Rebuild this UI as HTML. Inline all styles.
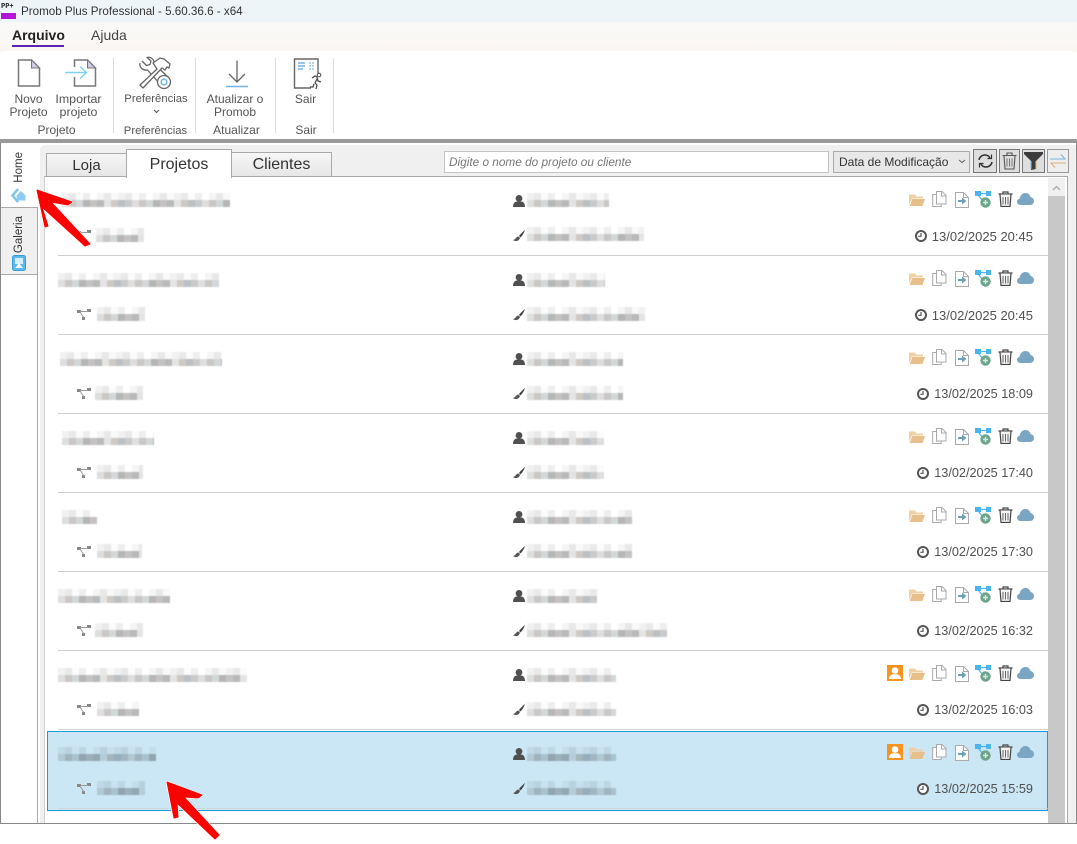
<!DOCTYPE html>
<html><head><meta charset="utf-8"><style>
html,body{margin:0;padding:0;background:#fff}
#p{position:relative;width:1077px;height:844px;overflow:hidden;background:#fff;font-family:"Liberation Sans",sans-serif;color:#444}
#p *{box-sizing:border-box}
.a{position:absolute}
.t{position:absolute;white-space:nowrap;text-align:center}
.sep{position:absolute;width:1px;background:#e0dcd8;top:58px;height:75px}
.rb{font-size:12px;line-height:13px;color:#555}
.gl{font-size:12px;line-height:14px;color:#555;top:123px}
.tab{position:absolute;border:1px solid #aaa;border-bottom:0;background:linear-gradient(#f6f6f6,#e6e6e6);font-size:16px;color:#333;text-align:center;white-space:nowrap}
.btn{position:absolute;top:149px;height:24px;border:1px solid #777;background:#dedede}
.r{position:absolute;left:48px;width:1000px;height:79px}
.r .l{position:absolute;left:10px;right:0;top:79px;height:1px;background:#d0d0d0}
.b{position:absolute;height:14px;mix-blend-mode:multiply;filter:blur(.6px);background:linear-gradient(90deg,#f1f1f1 0 7px,#e9e9e9 7px 14px,#fbfbfb 14px 21px,#eeeeee 21px 28px,#fff 28px 35px,#f5f5f5 35px 42px,#e8e8e8 42px 49px,#f9f9f9 49px 56px) 0 0/56px 7px repeat-x,linear-gradient(90deg,#dedede 0 7px,#cbc7c5 7px 14px,#d2d8d8 14px 21px,#b6b6b6 21px 28px,#c5c2c2 28px 35px,#b8baba 35px 42px,#e4e4e4 42px 49px,#cec9c3 49px 56px,#bbc0c4 56px 63px,#cacaca 63px 70px) 0 7px/70px 7px repeat-x}
.d{position:absolute;top:53px;right:15px;font-size:12.7px;line-height:15px;color:#505050;white-space:nowrap}
.d.w{font-size:13px}
.i{position:absolute;overflow:visible}
</style></head><body><div id="p">
<svg width="0" height="0" style="position:absolute"><defs>
<symbol id="folder" viewBox="0 0 16 16"><path d="M0 2.500h6l1.500 2H14v2H3L0 13z" fill="#f0d0a5"/><path d="M3.300 7H16l-2.600 7H.6z" fill="#e8bf8a"/></symbol>
<symbol id="copy" viewBox="0 0 15 16"><path d="M.7 3.500h8.500v12H.7z" fill="#fff" stroke="#aaa"/><path d="M4.500 .5h5.500l4 4v8.500H4.500z" fill="#fff" stroke="#aaa"/><path d="M9.500 .5v4.500h4.500" fill="none" stroke="#aaa"/></symbol>
<symbol id="imp" viewBox="0 0 14 16"><path d="M.5 .5h8l5 5v10H.5z" fill="#fff" stroke="#aaa"/><path d="M8.500 .5v5h5" fill="none" stroke="#aaa"/><path d="M3 8h4V5.500L11.500 9 7 12.500V10H3z" fill="#6ba0b8"/></symbol>
<symbol id="share" viewBox="0 0 16 17"><rect x="0" y="0" width="6" height="5" fill="#4db5ee"/><rect x="11" y="0" width="5" height="5" fill="#4db5ee"/><path d="M5 2.500h7M3 4l5 6" stroke="#4db5ee" stroke-width="1.200" fill="none"/><circle cx="10.500" cy="11.500" r="5.200" fill="#6da58c"/><path d="M10.500 9v5M8 11.500h5" stroke="#d6ebe0" stroke-width="1.400"/></symbol>
<symbol id="trash" viewBox="0 0 15 16"><path d="M.5 3h14M5 3V1h5v2" fill="none" stroke="#444" stroke-width="1.200"/><path d="M2 3.500l1 12h9l1-12" fill="#f4f4f4" stroke="#444" stroke-width="1.200"/><path d="M5 6v7.500M7.500 6v7.500M10 6v7.500" stroke="#666" stroke-width="1"/></symbol>
<symbol id="cloud" viewBox="0 0 17 12"><path d="M3.500 12C1.500 12 0 10.600 0 8.800 0 7.200 1.100 6 2.600 5.700 3 2.400 5.600 0 8.500 0c2.600 0 4.500 1.700 5 4 1.900.3 3.500 2 3.500 4 0 2.300-1.700 4-4 4z" fill="#7aa6c4"/></symbol>
<symbol id="person" viewBox="0 0 12 12"><circle cx="6" cy="3.400" r="3.400" fill="#505050"/><path d="M0 12.500c0-3.500 1-5.500 3.500-6h5c2.500.5 3.500 2.500 3.500 6z" fill="#505050"/></symbol>
<symbol id="brush" viewBox="0 0 12 12"><path d="M12 0C10 1.500 7.500 4 6 6l1.500 1.500C9.500 5.500 11 3 12 0z" fill="#444"/><path d="M5.300 6.500C3 6.500 3 9.500 0 10c1.500 1.500 6 2 7-2.200z" fill="#555"/></symbol>
<symbol id="branch" viewBox="0 0 14 11"><rect x="0" y="1" width="4" height="3" fill="#888"/><rect x="10" y="0" width="4" height="3" fill="#888"/><rect x="5" y="8" width="3" height="3" fill="#888"/><path d="M3 2.500h8M3 3l4 6" stroke="#999" stroke-width="1" fill="none"/></symbol>
<symbol id="clock" viewBox="0 0 12 12"><circle cx="6" cy="6" r="5" fill="#fff" stroke="#555" stroke-width="2"/><path d="M6 3v3.300H3.300" fill="none" stroke="#555" stroke-width="1.200"/></symbol>
<symbol id="orange" viewBox="0 0 16 16"><rect width="16" height="16" fill="#f7931e"/><circle cx="8" cy="5.500" r="3.300" fill="#fff"/><path d="M2 14c0-3 2-4.500 4-4.800h4c2 .3 4 1.800 4 4.800z" fill="#fff"/></symbol>
<symbol id="icons" viewBox="0 0 126 17"><use href="#folder" x="0" y="1" width="16" height="16"/><use href="#copy" x="23" y="0" width="15" height="16"/><use href="#imp" x="46" y="1" width="14" height="16"/><use href="#share" x="66" y="0" width="16" height="17"/><use href="#trash" x="89" y="0" width="15" height="16"/><use href="#cloud" x="108" y="2" width="17" height="12"/></symbol>
</defs></svg>

<!-- title bar -->
<div class="a" style="left:0;top:0;width:1077px;height:22px;background:#eef5f8"></div>
<div class="a" style="left:1px;top:3px;font:bold 7px 'Liberation Mono',monospace;color:#222">PP+</div>
<div class="a" style="left:1px;top:13px;width:15px;height:6px;background:#b514d6"></div>
<div class="t" style="left:21px;top:5px;font-size:11.63px;line-height:14px;color:#333">Promob Plus Professional - 5.60.36.6 - x64</div>
<!-- ribbon tabs -->
<div class="a" style="left:0;top:22px;width:1077px;height:30px;background:linear-gradient(#f9f9f9,#fbf6f2)"></div>
<div class="t" style="left:12px;top:27px;font-size:14px;font-weight:bold;line-height:17px;color:#222">Arquivo</div>
<div class="a" style="left:12px;top:45px;width:52px;height:2px;background:#5a23b8"></div>
<div class="t" style="left:91px;top:27px;font-size:14px;line-height:17px;color:#444">Ajuda</div>
<div class="a" style="left:0;top:51px;width:1077px;height:89px;background:#fff;border-radius:5px 5px 0 0"></div>

<!-- ribbon icons -->
<svg class="i" style="left:17px;top:59px" width="24" height="28" viewBox="0 0 24 28"><path d="M1.500 1h13l8 8v18H1.500z" fill="#fff" stroke="#777" stroke-width="1.500"/><path d="M14.500 1v8h8z" fill="#d2c9e6" stroke="#777" stroke-width="1"/></svg>
<svg class="i" style="left:64px;top:59px" width="34" height="28" viewBox="0 0 34 28"><path d="M10.500 8V1h13l8 8v18h-21v-9" fill="#fff" stroke="#777" stroke-width="1.500"/><path d="M23.500 1v8h8z" fill="#d2c9e6" stroke="#777"/><path d="M1 13.500h21M16 7.500l6.500 6-6.500 6" fill="none" stroke="#7cd3f5" stroke-width="1.400"/></svg>
<svg class="i" style="left:139px;top:57px" width="33" height="32" viewBox="0 0 33 32" fill="none" stroke="#666" stroke-width="1.300" stroke-linejoin="round"><path d="M3 4l4.500 4.500 3.500-1L12 4 8 .5C12-.5 15.500 2.500 15 7l14 13"/><path d="M1 6c-1 4 3 8 7.500 7L22 28"/><path d="M14 6l7-5 4 1 6 5-1 4-2-1-2 3-3-2L4 31l-3-3 17-16z" fill="#fff"/><circle cx="25" cy="25" r="6.500" fill="#fff"/><circle cx="25" cy="25" r="2.800" stroke="#6fb3e4" stroke-width="1.500"/></svg>
<svg class="i" style="left:225px;top:60px" width="24" height="28" viewBox="0 0 24 28"><path d="M12 .5v21M4 14l8 8 8-8" fill="none" stroke="#666" stroke-width="1.300"/><path d="M1 26.500h22" stroke="#6fb4ea" stroke-width="1.500"/></svg>
<svg class="i" style="left:293px;top:58px" width="30" height="32" viewBox="0 0 30 32"><path d="M25 15V1H1.500v29H18" fill="#fff" stroke="#666" stroke-width="1.400"/><path d="M5 5h7M5 8h7M5 11h5" stroke="#6fb4ea" stroke-width="1.500"/><path d="M16 5h6M16 8h6M16 11h6" stroke="#9cc7ea" stroke-width="1.500" stroke-dasharray="2 1"/><circle cx="26" cy="17" r="1.800" fill="none" stroke="#444"/><path d="M19 20l3-2 2 1 1 4 3 1M24 21l-2 4 2 2-1 4M21 26l-1 3-3 0" fill="none" stroke="#444" stroke-width="1.200"/></svg>

<div class="t rb" style="left:0;top:92px;width:57px;margin-top:1px">Novo<br>Projeto</div>
<div class="t rb" style="left:50px;top:92px;width:57px;margin-top:1px;font-size:12.400px">Importar<br>projeto</div>
<div class="t rb" style="left:118px;top:92px;width:76px;margin-top:1px;font-size:11.300px">Preferências</div>
<svg class="i" style="left:153px;top:109px" width="7" height="5"><path d="M1 1l2.500 2.500L6 1" fill="none" stroke="#555" stroke-width="1.100"/></svg>
<div class="t rb" style="left:198px;top:92px;width:74px;margin-top:1px">Atualizar o<br>Promob</div>
<div class="t rb" style="left:285px;top:92px;width:41px;margin-top:1px">Sair</div>
<div class="t gl" style="left:0;width:113px">Projeto</div>
<div class="t gl" style="left:115px;width:81px;margin-top:1px;font-size:11.300px">Preferências</div>
<div class="t gl" style="left:197px;width:79px">Atualizar</div>
<div class="t gl" style="left:277px;width:58px">Sair</div>
<div class="sep" style="left:113px"></div><div class="sep" style="left:195px"></div><div class="sep" style="left:275px"></div><div class="sep" style="left:333px"></div>
<div class="a" style="left:0;top:139px;width:1077px;height:4px;background:#9a9a9a"></div>

<!-- main frame -->
<div class="a" style="left:0;top:143px;width:1px;height:681px;background:#888"></div>
<div class="a" style="left:1076px;top:143px;width:1px;height:681px;background:#888"></div>
<div class="a" style="left:0;top:823px;width:1077px;height:1px;background:#888"></div>
<div class="a" style="left:40px;top:145px;width:1036px;height:678px;background:#f0f0f0;border-radius:5px 0 0 0"></div>

<!-- sidebar -->
<div class="a" style="left:37px;top:207px;width:1px;height:616px;background:#aaa"></div>
<div class="a" style="left:1px;top:207px;width:37px;height:1px;background:#aaa"></div>
<div class="a" style="left:1px;top:208px;width:36px;height:67px;background:#f0f0f0;border-bottom:1px solid #aaa"></div>
<div class="t" style="left:12px;top:152px;writing-mode:vertical-rl;transform:rotate(180deg);font-size:11.500px;line-height:14px;color:#333">Home</div>
<svg class="i" style="left:11px;top:188px" width="15" height="15" viewBox="0 0 15 15"><path d="M7 1L1.500 7.500 7 14" fill="none" stroke="#7cc4ea" stroke-width="2.500"/><path d="M5.500 7.500L10 3l4.500 4.500V12.500H6z" fill="#8ecdf0"/></svg>
<div class="t" style="left:12px;top:216px;writing-mode:vertical-rl;transform:rotate(180deg);font-size:11.500px;line-height:14px;color:#333">Galeria</div>
<svg class="i" style="left:12px;top:255px" width="14" height="16" viewBox="0 0 14 16"><rect x=".5" y=".5" width="13" height="15" rx="2" fill="#5cb8ee" stroke="#3c9ad6"/><rect x="3" y="3" width="8" height="6" fill="#d4eefb"/><path d="M3 13l4-5 4 5z" fill="#fff"/></svg>

<!-- tabs -->
<div class="tab" style="left:46px;top:153px;width:81px;height:24px;line-height:24px;font-size:15px">Loja</div>
<div class="tab" style="left:231px;top:152px;width:101px;height:25px;line-height:24px">Clientes</div>
<div class="a" style="left:44px;top:176px;width:1024px;height:647px;background:#fff;border-top:1px solid #aaa;border-right:1px solid #aaa;border-left:1px solid #d0d0d0"></div>
<div class="tab" style="left:126px;top:149px;width:106px;height:29px;line-height:29px;background:#fff">Projetos</div>

<!-- search -->
<div class="a" style="left:444px;top:151px;width:385px;height:22px;background:#fff;border:1px solid #c4c4c4;font-style:italic;font-size:11.800px;line-height:20px;color:#777;padding-left:4px;white-space:nowrap">Digite o nome do projeto ou cliente</div>
<div class="a" style="left:833px;top:151px;width:137px;height:22px;background:#e8e8e8;border:1px solid #aaa;font-size:12px;line-height:20px;color:#333;padding-left:5px;white-space:nowrap">Data de Modificação</div>
<svg class="i" style="left:958px;top:159px" width="8" height="5"><path d="M1 1l3 2.500L7 1" fill="none" stroke="#666" stroke-width="1.100"/></svg>
<div class="btn" style="left:973px;width:24px"></div>
<svg class="i" style="left:977px;top:153px" width="17" height="16" viewBox="0 0 17 16" fill="none" stroke="#333" stroke-width="1.500"><path d="M2 7c.5-3 3-5 6-5 2 0 4 1 5 3"/><path d="M15 9c-.5 3-3 5-6 5-2 0-4-1-5-3"/><path d="M14.500 1.500v4h-4" stroke-width="1.200"/><path d="M2.500 14.500v-4h4" stroke-width="1.200"/></svg>
<div class="btn" style="left:999px;width:21px"></div>
<svg class="i" style="left:1002px;top:152px" width="15" height="18" viewBox="0 0 15 18"><path d="M.5 3.500h14M5 3.500V1h5v2.500" fill="none" stroke="#555" stroke-width="1.100"/><path d="M2 4l1 13h9l1-13" fill="#ddd" stroke="#555" stroke-width="1.100"/><path d="M5 6.500v8M7.500 6.500v8M10 6.500v8" stroke="#777"/></svg>
<div class="btn" style="left:1022px;width:23px"></div>
<svg class="i" style="left:1024px;top:152px" width="19" height="18" viewBox="0 0 19 18"><path d="M0 0h19v2l-7 7v8l-5 1V9L0 2z" fill="#3c3c3c"/><path d="M12 9v8" stroke="#e8b27a"/><path d="M7 9v8" stroke="#8bbfe0"/></svg>
<div class="btn" style="left:1047px;width:22px;background:#eee;border-color:#999"></div>
<svg class="i" style="left:1049px;top:153px" width="18" height="16" viewBox="0 0 18 16" fill="none" stroke-width="1.100"><path d="M1 6h15L12 1.500" stroke="#7cb6dc"/><path d="M17 10H2l4 4.500" stroke="#d8b27c"/></svg>

<!-- scrollbar -->
<div class="a" style="left:1048px;top:178px;width:17px;height:645px;background:#c8c8c8"></div>
<div class="a" style="left:1048px;top:178px;width:17px;height:18px;background:#f0f0f0"></div>
<svg class="i" style="left:1052px;top:185px" width="9" height="6"><path d="M1 5l3.500-3.500L8 5" fill="none" stroke="#aaa" stroke-width="1.300"/></svg>

<!-- selected row -->
<div class="a" style="left:47px;top:731px;width:1001px;height:80px;background:#cbe6f5;border:1px solid #1e9bd7"></div>

<div class="r" style="top:176px"><div class="l"></div><div class="b" style="left:14px;top:17px;width:168px"></div><div class="b" style="left:48px;top:52px;width:48px"></div><div class="b" style="left:479px;top:17px;width:82px"></div><div class="b" style="left:479px;top:51px;width:117px"></div><svg class="i" style="left:861px;top:15px" width="126" height="17"><use href="#icons"/></svg><svg class="i" style="left:29px;top:54px" width="14" height="11"><use href="#branch"/></svg><svg class="i" style="left:465px;top:19px" width="12" height="12"><use href="#person"/></svg><svg class="i" style="left:465px;top:54px" width="12" height="12"><use href="#brush"/></svg><svg class="i" style="left:867px;top:54px" width="12" height="12"><use href="#clock"/></svg><div class="d w">13/02/2025 20:45</div></div>

<div class="r" style="top:255px"><div class="l"></div><div class="b" style="left:10px;top:18px;width:161px"></div><div class="b" style="left:49px;top:52px;width:48px"></div><div class="b" style="left:479px;top:18px;width:78px"></div><div class="b" style="left:479px;top:52px;width:118px"></div><svg class="i" style="left:861px;top:15px" width="126" height="17"><use href="#icons"/></svg><svg class="i" style="left:29px;top:54px" width="14" height="11"><use href="#branch"/></svg><svg class="i" style="left:465px;top:19px" width="12" height="12"><use href="#person"/></svg><svg class="i" style="left:465px;top:54px" width="12" height="12"><use href="#brush"/></svg><svg class="i" style="left:867px;top:54px" width="12" height="12"><use href="#clock"/></svg><div class="d w">13/02/2025 20:45</div></div>

<div class="r" style="top:334px"><div class="l"></div><div class="b" style="left:12px;top:18px;width:162px"></div><div class="b" style="left:47px;top:52px;width:48px"></div><div class="b" style="left:479px;top:18px;width:96px"></div><div class="b" style="left:479px;top:52px;width:96px"></div><svg class="i" style="left:861px;top:15px" width="126" height="17"><use href="#icons"/></svg><svg class="i" style="left:29px;top:54px" width="14" height="11"><use href="#branch"/></svg><svg class="i" style="left:465px;top:19px" width="12" height="12"><use href="#person"/></svg><svg class="i" style="left:465px;top:54px" width="12" height="12"><use href="#brush"/></svg><svg class="i" style="left:869px;top:54px" width="12" height="12"><use href="#clock"/></svg><div class="d">13/02/2025 18:09</div></div>

<div class="r" style="top:413px"><div class="l"></div><div class="b" style="left:14px;top:18px;width:92px"></div><div class="b" style="left:49px;top:52px;width:46px"></div><div class="b" style="left:479px;top:18px;width:77px"></div><div class="b" style="left:479px;top:52px;width:77px"></div><svg class="i" style="left:861px;top:15px" width="126" height="17"><use href="#icons"/></svg><svg class="i" style="left:29px;top:54px" width="14" height="11"><use href="#branch"/></svg><svg class="i" style="left:465px;top:19px" width="12" height="12"><use href="#person"/></svg><svg class="i" style="left:465px;top:54px" width="12" height="12"><use href="#brush"/></svg><svg class="i" style="left:869px;top:54px" width="12" height="12"><use href="#clock"/></svg><div class="d">13/02/2025 17:40</div></div>

<div class="r" style="top:492px"><div class="l"></div><div class="b" style="left:14px;top:18px;width:35px"></div><div class="b" style="left:49px;top:52px;width:45px"></div><div class="b" style="left:479px;top:18px;width:105px"></div><div class="b" style="left:479px;top:52px;width:105px"></div><svg class="i" style="left:861px;top:15px" width="126" height="17"><use href="#icons"/></svg><svg class="i" style="left:29px;top:54px" width="14" height="11"><use href="#branch"/></svg><svg class="i" style="left:465px;top:19px" width="12" height="12"><use href="#person"/></svg><svg class="i" style="left:465px;top:54px" width="12" height="12"><use href="#brush"/></svg><svg class="i" style="left:869px;top:54px" width="12" height="12"><use href="#clock"/></svg><div class="d">13/02/2025 17:30</div></div>

<div class="r" style="top:571px"><div class="l"></div><div class="b" style="left:10px;top:18px;width:112px"></div><div class="b" style="left:47px;top:52px;width:48px"></div><div class="b" style="left:479px;top:18px;width:70px"></div><div class="b" style="left:479px;top:52px;width:140px"></div><svg class="i" style="left:861px;top:15px" width="126" height="17"><use href="#icons"/></svg><svg class="i" style="left:29px;top:54px" width="14" height="11"><use href="#branch"/></svg><svg class="i" style="left:465px;top:19px" width="12" height="12"><use href="#person"/></svg><svg class="i" style="left:465px;top:54px" width="12" height="12"><use href="#brush"/></svg><svg class="i" style="left:869px;top:54px" width="12" height="12"><use href="#clock"/></svg><div class="d">13/02/2025 16:32</div></div>

<div class="r" style="top:650px"><div class="l"></div><div class="b" style="left:10px;top:18px;width:189px"></div><div class="b" style="left:49px;top:52px;width:42px"></div><div class="b" style="left:479px;top:18px;width:89px"></div><div class="b" style="left:479px;top:52px;width:89px"></div><svg class="i" style="left:839px;top:15px" width="16" height="16"><use href="#orange"/></svg><svg class="i" style="left:861px;top:15px" width="126" height="17"><use href="#icons"/></svg><svg class="i" style="left:29px;top:54px" width="14" height="11"><use href="#branch"/></svg><svg class="i" style="left:465px;top:19px" width="12" height="12"><use href="#person"/></svg><svg class="i" style="left:465px;top:54px" width="12" height="12"><use href="#brush"/></svg><svg class="i" style="left:869px;top:54px" width="12" height="12"><use href="#clock"/></svg><div class="d">13/02/2025 16:03</div></div>

<div class="r" style="top:729px"><div class="l" style="opacity:.7"></div><div class="b" style="left:10px;top:18px;width:98px"></div><div class="b" style="left:49px;top:52px;width:48px"></div><div class="b" style="left:479px;top:18px;width:89px"></div><div class="b" style="left:479px;top:52px;width:89px"></div><svg class="i" style="left:839px;top:15px" width="16" height="16"><use href="#orange"/></svg><svg class="i" style="left:861px;top:15px" width="126" height="17"><use href="#icons"/></svg><svg class="i" style="left:29px;top:54px" width="14" height="11"><use href="#branch"/></svg><svg class="i" style="left:465px;top:19px" width="12" height="12"><use href="#person"/></svg><svg class="i" style="left:465px;top:54px" width="12" height="12"><use href="#brush"/></svg><svg class="i" style="left:869px;top:54px" width="12" height="12"><use href="#clock"/></svg><div class="d">13/02/2025 15:59</div></div>

<!-- red arrows -->
<svg class="a" style="left:0;top:0" width="1077" height="844" stroke-linejoin="round">
<g fill="#fff" stroke="#fff" stroke-width="2.500"><path d="M37 190L72 202L68 205L51 202L90 244L85 246L42 207L48 226L45 227Z"/><path d="M167 782L202 795L198 798L184 797L219 835L215 839L177 803L178 817L174 818Z"/></g>
<g fill="#f00" stroke="#f00" stroke-width="1"><path d="M37 190L72 202L68 205L51 202L90 244L85 246L42 207L48 226L45 227Z"/><path d="M167 782L202 795L198 798L184 797L219 835L215 839L177 803L178 817L174 818Z"/></g>
</svg>
</div></body></html>
